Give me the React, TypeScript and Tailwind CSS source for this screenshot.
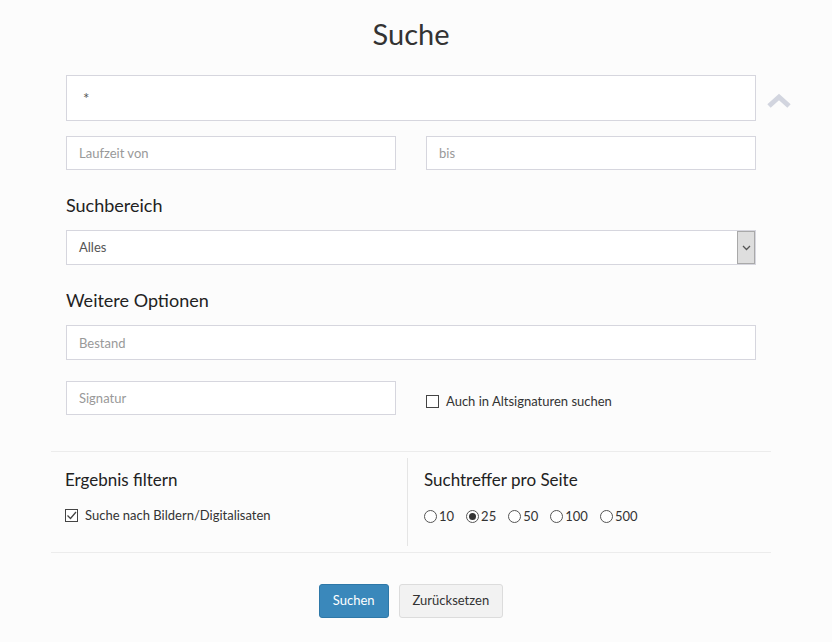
import { useState } from 'react';

const inputCls =
  'w-full min-w-0 h-[34px] px-[12px] border border-[#d6d6de] bg-white text-[13px] text-[#555] placeholder:text-[#999] outline-none';

const Radio = ({ checked, label, onClick }: { checked: boolean; label: string; onClick: () => void }) => (
  <label className="flex items-center cursor-pointer mr-[12px]" onClick={onClick}>
    <span className="w-[13px] h-[13px] rounded-full border border-[#555] bg-white flex items-center justify-center">
      {checked && <span className="w-[7px] h-[7px] rounded-full bg-[#333]" />}
    </span>
    <span className="ml-[2px] text-[13px] text-[#333]">{label}</span>
  </label>
);

const Check = ({ checked, label, onClick }: { checked: boolean; label: string; onClick: () => void }) => (
  <label className="flex items-center cursor-pointer" onClick={onClick}>
    <span className="w-[13px] h-[13px] border border-[#444] bg-white flex items-center justify-center">
      {checked && (
        <svg width="11" height="11" viewBox="0 0 11 11">
          <path d="M1.5 5.5 L4.5 8.5 L10 2" fill="none" stroke="#444" strokeWidth="1.3" />
        </svg>
      )}
    </span>
    <span className="ml-[7px] text-[13px] text-[#333]">{label}</span>
  </label>
);

const App = () => {
  const [perPage, setPerPage] = useState('25');
  const [images, setImages] = useState(true);
  const [alt, setAlt] = useState(false);

  return (
    <div className="min-h-[642px] bg-[#fcfcfc] text-[#333]" style={{ fontFamily: 'Lato, "Open Sans", sans-serif' }}>
      <div className="w-[720px] ml-[51px] pt-[14px]">
        <h1 className="text-center text-[29px] leading-[40px] text-[#333] mb-[21px]">Suche</h1>

        <div className="px-[15px]">
          <div className="relative">
            <input
              className="w-full h-[46px] px-[16px] border border-[#d6d6de] bg-white text-[15px] text-[#555] outline-none"
              defaultValue="*"
            />
            <svg className="absolute left-[700px] top-[18px]" width="26" height="16" viewBox="0 0 26 16">
              <path d="M3 13 L13 4 L23 13" fill="none" stroke="#d2d5df" strokeWidth="5" />
            </svg>
          </div>

          <div className="grid grid-cols-2 gap-[30px] mt-[15px]">
            <input className={inputCls} placeholder="Laufzeit von" />
            <input className={inputCls} placeholder="bis" />
          </div>

          <h2 className="text-[18px] leading-[24px] mt-[23px] text-[#222]">Suchbereich</h2>
          <div className="relative mt-[13px] h-[35px] border border-[#d6d6de] bg-white flex items-center">
            <span className="pl-[12px] text-[13px] text-[#555]">Alles</span>
            <div className="absolute right-0 top-0 w-[18px] h-[33px] bg-[#dedede] border border-[#a9a9a9] flex items-center justify-center">
              <svg width="9" height="6" viewBox="0 0 9 6">
                <path d="M1 1 L4.5 4.5 L8 1" fill="none" stroke="#555" strokeWidth="1.3" />
              </svg>
            </div>
          </div>

          <h2 className="text-[18px] leading-[24px] mt-[23px] text-[#222]">Weitere Optionen</h2>
          <input className={inputCls + ' mt-[13px] h-[35px]'} placeholder="Bestand" />

          <div className="grid grid-cols-2 gap-[30px] mt-[21px] items-center">
            <input className={inputCls} placeholder="Signatur" />
            <div className="pt-[7px]">
              <Check checked={alt} label="Auch in Altsignaturen suchen" onClick={() => setAlt(!alt)} />
            </div>
          </div>
        </div>

        <div className="mt-[36px] h-[101px] border-t border-[#ececec] flex">
          <div className="w-[357px] px-[14px] pt-[11px] border-r border-[#e5e5e5] my-[6px]">
            <h3 className="text-[17px] leading-[22px] text-[#222]">Ergebnis filtern</h3>
            <div className="mt-[15px]">
              <Check checked={images} label="Suche nach Bildern/Digitalisaten" onClick={() => setImages(!images)} />
            </div>
          </div>
          <div className="flex-1 px-[16px] pt-[17px]">
            <h3 className="text-[17px] leading-[22px] text-[#222]">Suchtreffer pro Seite</h3>
            <div className="flex mt-[16px]">
              {['10', '25', '50', '100', '500'].map((v) => (
                <Radio key={v} label={v} checked={perPage === v} onClick={() => setPerPage(v)} />
              ))}
            </div>
          </div>
        </div>

        <div className="border-t border-[#ececec] flex justify-center gap-[10px] pt-[31px]">
          <button className="h-[34px] px-[13px] rounded-[3px] bg-[#3a88bb] border border-[#2e78a8] text-white text-[13px]">
            Suchen
          </button>
          <button className="h-[34px] px-[13px] rounded-[3px] bg-[#f2f2f2] border border-[#dcdcdc] text-[#333] text-[13px]">
            Zurücksetzen
          </button>
        </div>
      </div>
    </div>
  );
};

export default App;
